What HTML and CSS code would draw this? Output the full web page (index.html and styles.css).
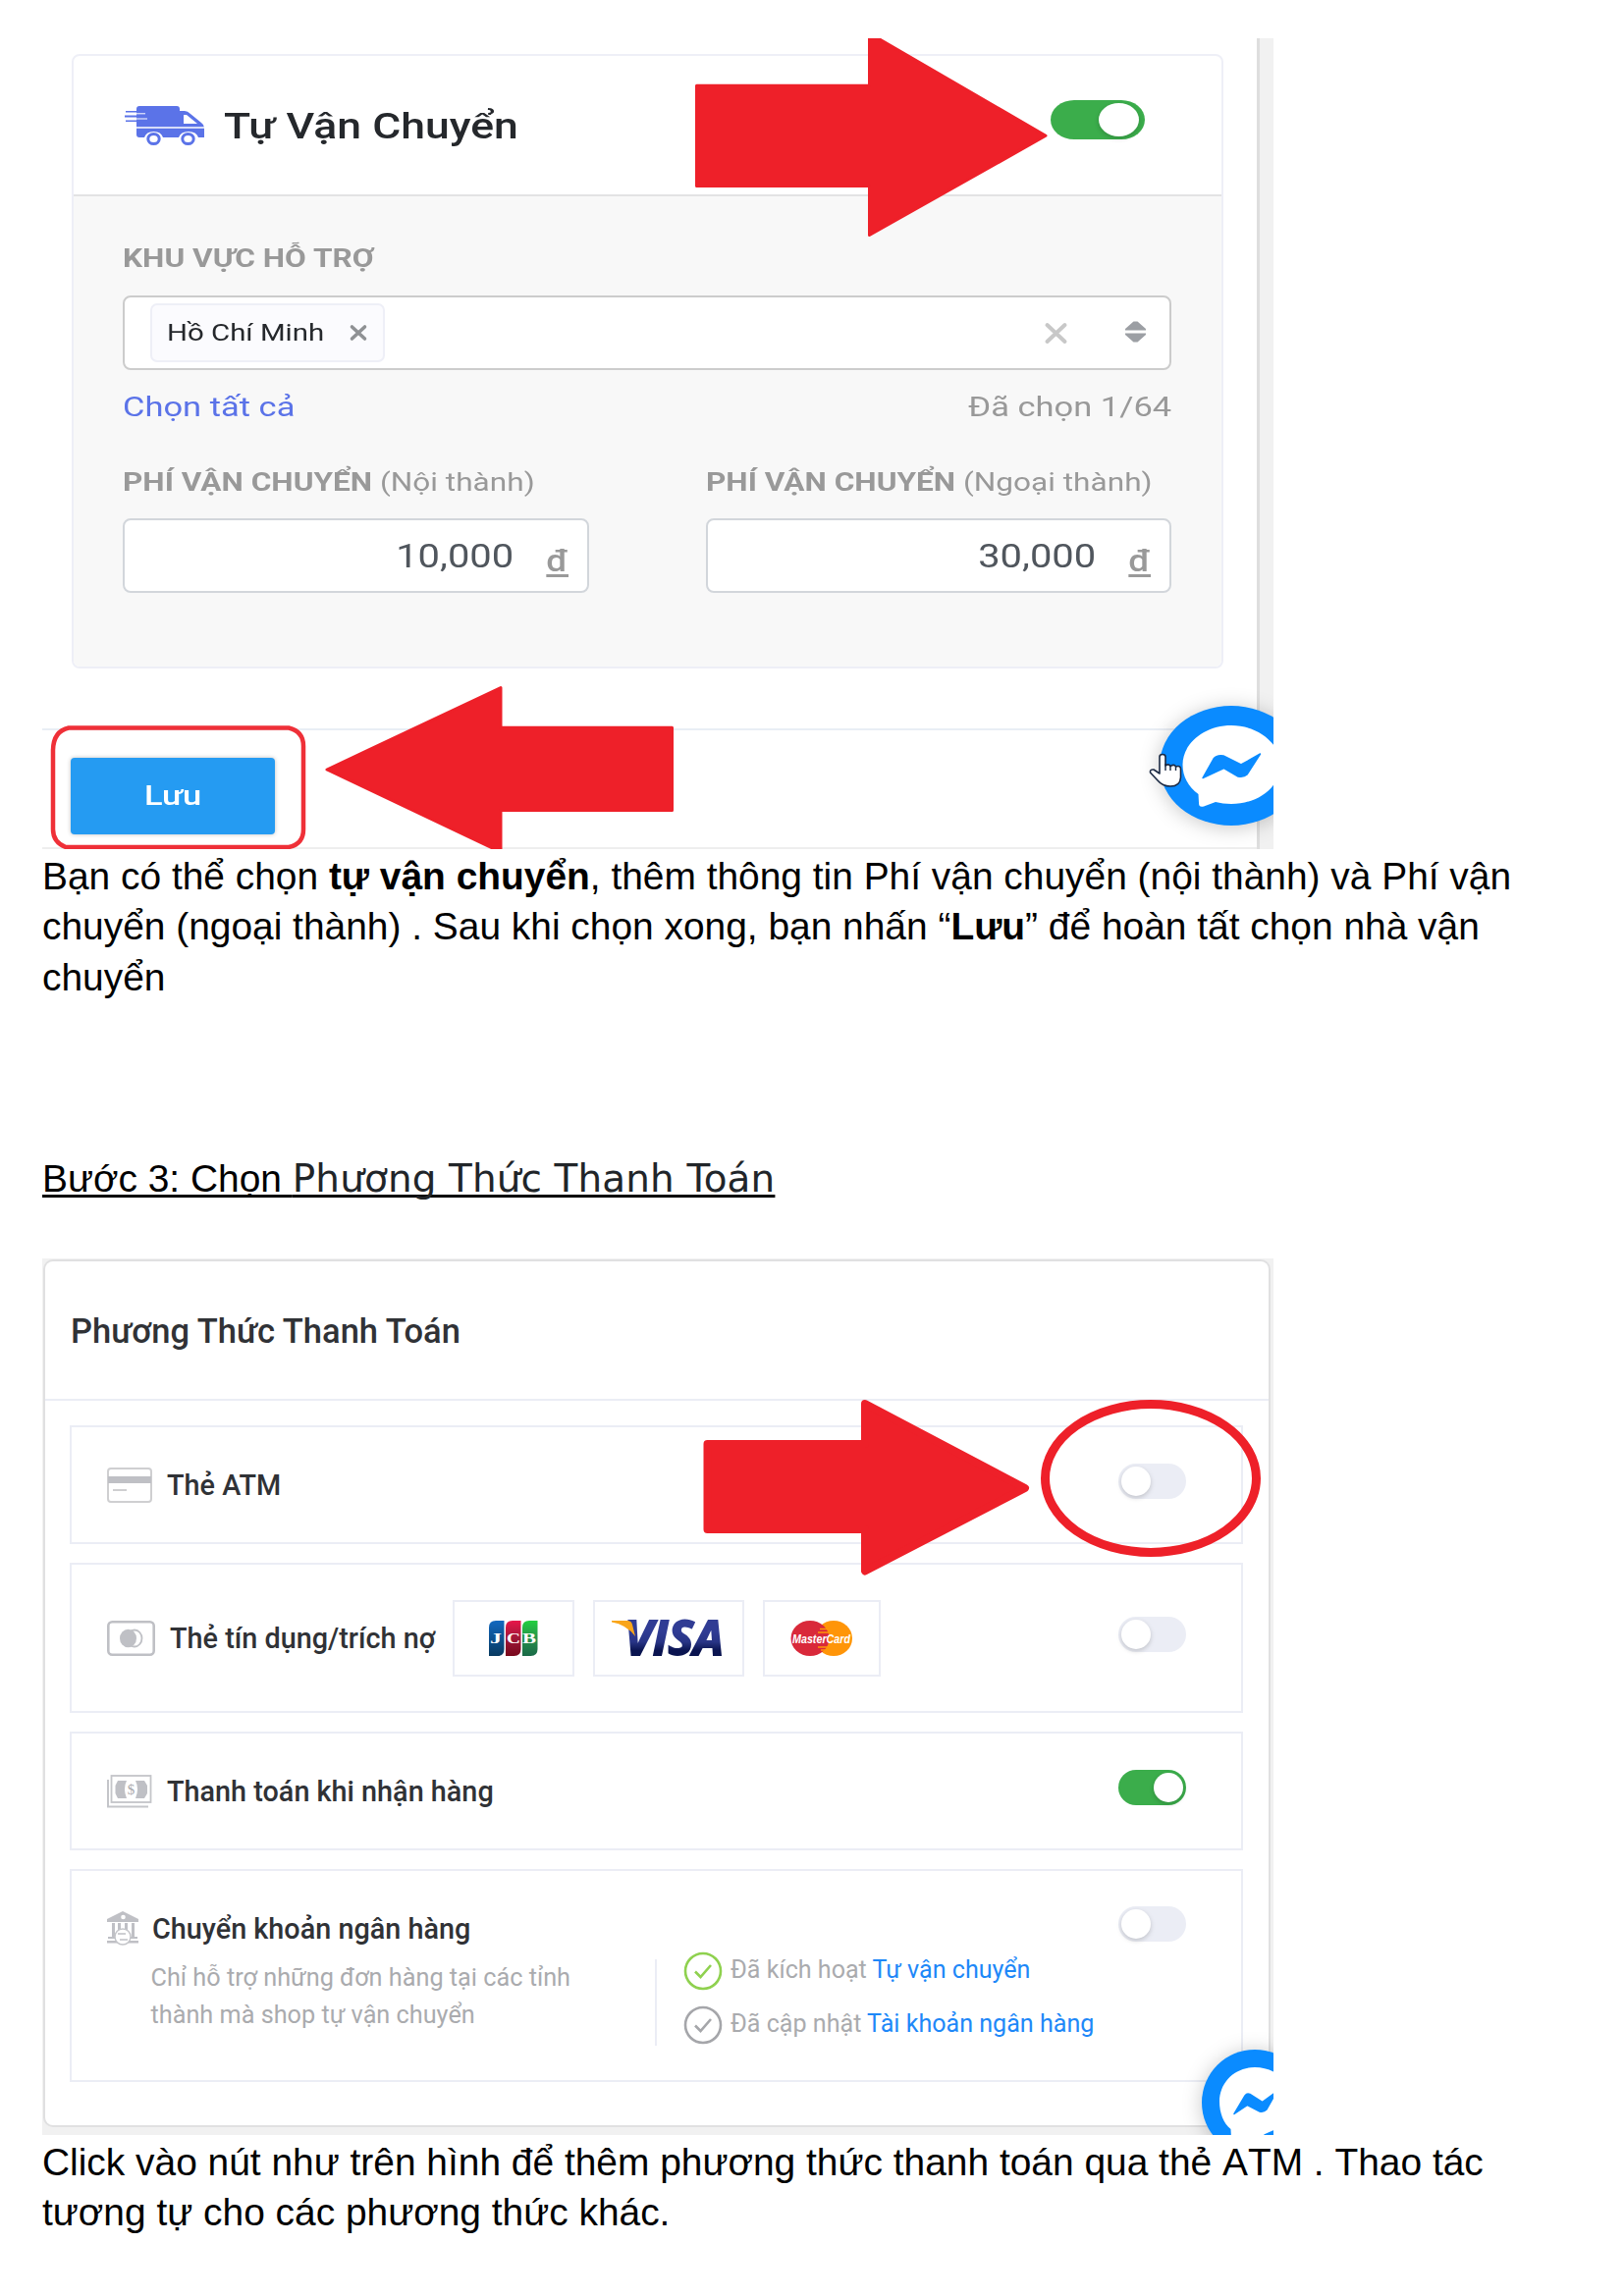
FILE: index.html
```html
<!DOCTYPE html>
<html lang="vi">
<head>
<meta charset="utf-8">
<title>Hướng dẫn vận chuyển và thanh toán</title>
<link rel="stylesheet" href="styles.css">
</head>
<body>
<main class="page">
  <figure class="shot shipping">
    <div class="shipping-main">
      <section class="ship-card">
        <header class="ship-head">
          <svg class="truck" width="81" height="40" viewBox="0 0 81 40">
            <path fill="#5b73e8" d="M12 3Q12 0 15 0H53Q56 0 56 3V5H61Q64 5 67 8L78 17Q81 19 81 22V32H75Q73 26 65 26Q57 26 55 32H39Q37 26 29.500 26Q22 26 20 32H15Q12 32 12 29V16H1V14.500H12V11.500H0V9.500H12V6.500H1V5H12Z"/>
            <path fill="#fff" d="M60 9H63L74 18H60Z"/>
            <path stroke="#fff" stroke-width="1.300" d="M12 22H81"/>
            <path stroke="#fff" stroke-width="1" d="M12 7.800H21M12 13H23"/>
            <g fill="#fff" stroke="#5b73e8" stroke-width="3"><ellipse cx="29.500" cy="33.500" rx="5.700" ry="5"/><ellipse cx="64.500" cy="33.500" rx="5.700" ry="5"/></g>
          </svg>
          <h2 class="ship-title wide">Tự Vận Chuyển</h2>
          <span class="toggle toggle-lg on"></span>
        </header>
        <div class="ship-body">
          <div class="label"><span class="wide"><b>KHU VỰC HỖ TRỢ</b></span></div>
          <div class="select">
            <span class="tag">
              <span class="tag-text"><span class="wide">Hồ Chí Minh</span></span>
              <svg width="18" height="16" viewBox="0 0 18 16"><path stroke="#8f9194" stroke-width="3.600" stroke-linecap="round" d="M2.500 2L15.500 14M15.500 2L2.500 14"/></svg>
            </span>
            <svg class="clear" width="23" height="21" viewBox="0 0 23 21"><path stroke="#c8c8c8" stroke-width="4" stroke-linecap="round" d="M2.500 2L20.500 19M20.500 2L2.500 19"/></svg>
            <svg class="sort" width="21" height="22" viewBox="0 0 21 22"><path fill="#9c9fa4" d="M0 9.500V8L8.500 0.500H12.500L21 8V9.500ZM0 12.500V14L8.500 21.500H12.500L21 14V12.500Z"/></svg>
          </div>
          <div class="under">
            <a class="wide pick">Chọn tất cả</a>
            <span class="wide-r">Đã chọn 1/64</span>
          </div>
          <div class="fees">
            <div>
              <div class="label"><span class="wide"><b>PHÍ VẬN CHUYỂN</b> (Nội thành)</span></div>
              <div class="field"><span class="wide-r">10,000</span><span class="dong">đ</span></div>
            </div>
            <div>
              <div class="label"><span class="wide"><b>PHÍ VẬN CHUYỂN</b> (Ngoại thành)</span></div>
              <div class="field"><span class="wide-r">30,000</span><span class="dong">đ</span></div>
            </div>
          </div>
        </div>
      </section>
      <footer class="save-bar"><span class="save"><span class="wide-c">Lưu</span></span></footer>
    </div>
    <div class="gutter"></div>
    <svg class="marks" width="1254" height="826" viewBox="43 39 1254 826">
      <g fill="#ee2029" stroke="#ee2029" stroke-width="3" stroke-linejoin="round">
        <path d="M709.500 87.200H885.500V34L1065 138.300L885.500 239.500V189.500H709.500Z"/>
        <path d="M684.500 741.300H510V700.500L333 784L510 868V825.500H684.500Z"/>
      </g>
      <path fill="none" stroke="#ee2029" stroke-width="4.500" opacity=".93" d="M70 741.500H294Q309 745 309 760V845Q309 860 294 863H67Q54 858 54 845V765Q54 745 70 741.500Z"/>
      <g>
        <ellipse class="bubble-shadow" cx="1254" cy="780" rx="73" ry="61" fill="#0a8bff"/>
        <path fill="#fff" d="M1254 739C1281 739 1304 757 1304 779C1304 802 1281 819 1254 819C1248 819 1243 818 1238 817L1226 821.500Q1221 823 1221 818L1220.500 809C1210 801 1204.500 791 1204.500 779C1204.500 757 1227 739 1254 739Z"/>
        <path fill="#0a8bff" stroke="#0a8bff" stroke-width="1.500" stroke-linejoin="round" d="M1225 792.500L1236 773Q1239 769 1246 770L1264 779L1283.500 768L1270 789Q1267 792 1261 791L1246.500 782.500Z"/>
      </g>
      <path fill="#fff" stroke="#1c2a44" stroke-width="1.600" stroke-linejoin="round" d="M1181 788V771Q1181 768.500 1184 768.500Q1187 768.500 1187 771V780Q1190 777.500 1192 780.500Q1196 778 1197.500 781Q1202 779.500 1202.500 783V792Q1202 801 1192 801Q1184 801 1179 795L1171.500 787Q1171 783.500 1175 784Z"/>
      <path stroke="#1c2a44" stroke-width="1.400" d="M1187 778V785M1192 780V785M1197.500 781V785"/>
    </svg>
  </figure>

  <p class="para first">Bạn có thể chọn <b>tự vận chuyển</b>, thêm thông tin Phí vận chuyển (nội thành) và Phí vận<br>chuyển (ngoại thành) . Sau khi chọn xong, bạn nhấn “<b>Lưu</b>” để hoàn tất chọn nhà vận<br>chuyển</p>

  <h1 class="step">Bước 3: Chọn <span class="step-name">Phương Thức Thanh Toán</span></h1>

  <figure class="shot payment">
    <section class="pay-card">
      <h2 class="pay-head">Phương Thức Thanh Toán</h2>
      <div class="rows">
        <div class="row">
          <svg width="46" height="36" viewBox="0 0 46 36"><rect x="1" y="1" width="44" height="34" rx="3" fill="#fff" stroke="#cfcfd1" stroke-width="2"/><path fill="#bfc0c5" d="M1 9H45V16H1Z"/><path stroke="#cfcfd1" stroke-width="2" d="M6 23H20"/></svg>
          <span class="name">Thẻ ATM</span>
          <span class="toggle"></span>
        </div>
        <div class="row tall">
          <svg width="49" height="36" viewBox="0 0 49 36"><rect x="1.300" y="1.300" width="46.400" height="33.400" rx="4" fill="#fff" stroke="#bfc0c5" stroke-width="2.600"/><ellipse cx="28" cy="18" rx="7.500" ry="8.500" fill="#fff" stroke="#bfc0c5" stroke-width="1.800"/><ellipse cx="21.500" cy="18" rx="8.500" ry="9.300" fill="#bfc0c5"/></svg>
          <span class="name">Thẻ tín dụng/trích nợ</span>
          <span class="brands">
            <span class="brand jcb">
              <svg width="50" height="36" viewBox="0 0 50 36">
                <defs>
                  <linearGradient id="j1" x2="0" y2="1"><stop stop-color="#1268c0"/><stop offset="1" stop-color="#083a60"/></linearGradient>
                  <linearGradient id="j2" x2="0" y2="1"><stop stop-color="#e8174a"/><stop offset=".5" stop-color="#a01838"/><stop offset="1" stop-color="#78081c"/></linearGradient>
                  <linearGradient id="j3" x2="0" y2="1"><stop stop-color="#22d040"/><stop offset=".5" stop-color="#27904a"/><stop offset="1" stop-color="#1a6a48"/></linearGradient>
                </defs>
                <path fill="url(#j1)" d="M0 7Q0 0 7 0H15.500V29Q15.500 36 8.500 36H0Z"/>
                <path fill="url(#j2)" d="M17 7Q17 0 24 0H32.500V29Q32.500 36 25.500 36H17Z"/>
                <path fill="url(#j3)" d="M34 7Q34 0 41 0H49.500V29Q49.500 36 42.500 36H34Z"/>
                <g class="jcb-text"><text x="1" y="22.500" textLength="12" lengthAdjust="spacingAndGlyphs">J</text><text x="18" y="22.500" textLength="14" lengthAdjust="spacingAndGlyphs">C</text><text x="34" y="22.500" textLength="14" lengthAdjust="spacingAndGlyphs">B</text></g>
              </svg>
            </span>
            <span class="brand visa">
              <svg width="116" height="36" viewBox="0 0 116 36">
                <defs>
                  <linearGradient id="v1" gradientUnits="userSpaceOnUse" x1="0" x2="0" y1="0" y2="36"><stop offset=".3" stop-color="#303c94"/><stop offset=".6" stop-color="#283486"/><stop offset=".85" stop-color="#0a1450"/></linearGradient>
                </defs>
                <text class="visa-text" x="13" y="35" textLength="101" lengthAdjust="spacingAndGlyphs" fill="url(#v1)" stroke="url(#v1)">VISA</text>
                <path fill="#f9a51a" d="M0 0H16Q20 0 21 4L24 16Q15 4 0 1.500Z"/>
              </svg>
            </span>
            <span class="brand mc">
              <svg width="64" height="36" viewBox="0 0 64 36"><ellipse cx="44" cy="18" rx="19" ry="18" fill="#ff9508"/><ellipse cx="20" cy="18" rx="19.500" ry="18" fill="#d9293a"/><path stroke="#ff9508" stroke-width="1.300" d="M30 8.500H38M28 12H40M28 27H38M31 30H36"/><text class="mc-text" x="2" y="23" textLength="59" lengthAdjust="spacingAndGlyphs">MasterCard</text></svg>
            </span>
          </span>
          <span class="toggle"></span>
        </div>
        <div class="row">
          <svg width="46" height="34" viewBox="0 0 46 34"><path fill="none" stroke="#c4c5c9" stroke-width="2" d="M1 5V32.500H42"/><rect x="4.500" y="1" width="40" height="27" fill="#fff" stroke="#c4c5c9" stroke-width="1.800"/><path fill="#bfc0c5" d="M11 6H20Q16 14 20 24H11L8.500 19V11ZM29 6H38L41 11V19L38 24H29Q33 14 29 6Z"/><text class="dollar" x="24.500" y="20">$</text></svg>
          <span class="name">Thanh toán khi nhận hàng</span>
          <span class="toggle on"></span>
        </div>
        <div class="row bank">
          <svg class="bank-icon" width="33" height="35" viewBox="0 0 33 35"><path fill="#bfc0c5" d="M16 0L32 8V11H0V8ZM5 12H8V26H5ZM11 12H14V26H11ZM18 12H21V26H18ZM25 12H28V26H25ZM1 26H31V28H1ZM0 30H32V32.500H0Z"/><circle cx="16.500" cy="6" r="2.300" fill="#fff"/><circle cx="16" cy="26" r="8" fill="#fff" stroke="#c4c5c9" stroke-width="1.500"/><path stroke="#bfc0c5" stroke-width="1.500" d="M11 23H19M13 29H21"/></svg>
          <div class="bank-text">
            <div class="name">Chuyển khoản ngân hàng</div>
            <p class="desc">Chỉ hỗ trợ những đơn hàng tại các tỉnh<br>thành mà shop tự vận chuyển</p>
          </div>
          <ul class="checks">
            <li><svg class="ok" width="40" height="40" viewBox="0 0 40 40"><circle cx="20" cy="20" r="18"/><path d="M12 20.500L17.500 26L28 14"/></svg><span>Đã kích hoạt <a>Tự vận chuyển</a></span></li>
            <li><svg class="idle" width="40" height="40" viewBox="0 0 40 40"><circle cx="20" cy="20" r="18"/><path d="M12 20.500L17.500 26L28 14"/></svg><span>Đã cập nhật <a>Tài khoản ngân hàng</a></span></li>
          </ul>
          <span class="toggle"></span>
        </div>
      </div>
    </section>
    <svg class="marks" width="1254" height="893" viewBox="43 1282 1254 893">
      <path fill="#ee2029" stroke="#ee2029" stroke-width="8" stroke-linejoin="round" d="M720.500 1471H881V1430L1044 1516L881 1600.500V1558H720.500Z"/>
      <ellipse cx="1172" cy="1506" rx="107.500" ry="75.500" fill="none" stroke="#ee2029" stroke-width="9"/>
      <circle class="bubble-shadow" cx="1278" cy="2142" r="54" fill="#0a8bff"/>
      <path fill="#fff" d="M1278 2106C1299 2106 1316 2121 1316 2141C1316 2161 1299 2176 1278 2176L1254 2178L1253.500 2169C1246 2163 1242 2152 1242 2141C1242 2121 1258 2106 1278 2106Z"/>
      <path fill="#0a8bff" stroke="#0a8bff" stroke-width="1.500" stroke-linejoin="round" d="M1257 2153.500L1268 2135Q1270 2132 1273 2133.500L1285.500 2141.500L1300 2131L1290 2149Q1287 2152 1283 2151L1270.500 2144.500ZM1288 2175L1297 2171V2175Z"/>
    </svg>
  </figure>

  <p class="para last">Click vào nút như trên hình để thêm phương thức thanh toán qua thẻ ATM . Thao tác<br>tương tự cho các phương thức khác.</p>
</main>
</body>
</html>
```

FILE: styles.css
```css
* { box-sizing: border-box; }
body { margin: 0; background: #fff; color: #000; font-family: "Liberation Sans", Arial, sans-serif; }
.page { width: 1654px; height: 2339px; padding: 39px 0 0 43px; overflow: hidden; }
svg { display: block; flex: none; overflow: visible; }
h1, h2, p, ul, figure { margin: 0; padding: 0; }

.shot { position: relative; width: 1254px; overflow: hidden; font-family: Roboto, sans-serif; }
.marks { position: absolute; inset: 0; overflow: hidden; }
.bubble-shadow { filter: drop-shadow(0 2px 10px rgba(0, 0, 0, .22)); }

/* horizontally extended lettering of the shipping panel */
.wide, .wide-r, .wide-c { display: inline-block; white-space: nowrap; transform: scaleX(1.21); transform-origin: left; }
.wide-r { transform-origin: right; }
.wide-c { transform-origin: center; }

.toggle { position: relative; flex: none; width: 69px; height: 36px; border-radius: 18px; background: #ebedf5; }
.toggle::after { content: ""; position: absolute; left: 3px; top: 3px; width: 30px; height: 30px; border-radius: 50%; background: #fff; box-shadow: 0 2px 5px rgba(0, 0, 0, .18); }
.toggle.on { background: #3bad4b; }
.toggle.on::after { left: auto; right: 3px; }
.toggle-lg { width: 96px; height: 40px; border-radius: 24px / 20px; }
.toggle-lg::after { width: 41px; height: 34px; }
.toggle-lg.on::after { right: 6px; }

/* shipping */
.shipping { display: flex; height: 826px; }
.shipping-main { width: 1237px; border-bottom: 2px solid #eee; }
.gutter { flex: 1; background: #f1f1f1; border-left: 3px solid #dedede; }
.ship-card { display: flex; flex-direction: column; width: 1173px; height: 626px; margin: 16px 0 61px 30px; border: 2px solid #eeeff7; border-radius: 8px; overflow: hidden; }
.ship-head { display: flex; align-items: center; height: 143px; padding: 0 78px 0 52px; border-bottom: 2px solid #e3e3e4; }
.ship-title { margin: 2px 0 0 20px; font-size: 36px; font-weight: 500; color: #25282c; line-height: 44px; transform: scaleX(1.236); }
.ship-head .toggle { margin: -11px 0 0 auto; }
.ship-body { flex: 1; padding: 48px 51px 0 50px; background: #f8f8f8; color: #999; }
.label { height: 30px; line-height: 31px; font-size: 25px; }
.label .wide { transform: scaleX(1.264); }
.select { display: flex; align-items: center; height: 76px; margin: 23px 0 20px; padding: 0 24px 0 26px; background: #fff; border: 2px solid #ccc; border-radius: 8px; }
.tag { display: flex; align-items: center; width: 239px; height: 60px; padding-left: 15px; border: 2px solid #eeeff7; border-radius: 7px; background: #fbfbfe; color: #25282c; font-size: 24px; }
.tag-text { width: 186px; }
.tag-text .wide { transform: scaleX(1.225); }
.clear { margin: 0 59px 0 auto; }
.sort { margin-top: -2px; }
.under { display: flex; justify-content: space-between; height: 34px; margin-bottom: 45px; line-height: 35px; font-size: 28.5px; }
.pick { color: #5b73e8; }
.fees { display: grid; grid-template-columns: 475px 474px; justify-content: space-between; }
.field { display: flex; align-items: center; justify-content: flex-end; gap: 35px; height: 76px; margin-top: 22px; padding-right: 18px; background: #fff; border: 2px solid #d2d6db; border-radius: 8px; color: #50565d; font-size: 33px; }
.dong { width: 22px; margin-top: 9px; color: #999; font-size: 32px; font-weight: 500; text-decoration: underline; text-decoration-thickness: 3px; text-underline-offset: 3px; transform: scaleX(1.15); }
.save-bar { padding: 28px 0 0 29px; border-top: 2px solid #e9eef5; }
.save { display: flex; align-items: center; justify-content: center; width: 208px; height: 78px; border-radius: 4px; background: #259bf2; box-shadow: 0 0 4px rgba(0, 0, 0, .25); color: #fff; font-size: 28.5px; font-weight: 500; }
.save .wide-c { margin-top: -2px; }

/* document text */
.para { font-size: 38.9px; line-height: 51.4px; white-space: nowrap; }
.first { margin-top: 2px; }
.step { margin: 154px 0 56px; height: 51px; font-size: 38.9px; line-height: 51.4px; font-weight: 400; white-space: nowrap; text-decoration: underline; text-decoration-thickness: 2.5px; text-underline-offset: 3px; text-decoration-skip-ink: none; }
.step-name { font-family: "DejaVu Sans", sans-serif; font-size: 38.9px; letter-spacing: .15px; color: #212529; line-height: 1; }
.last { margin-top: 1.5px; font-kerning: none; }

/* payment */
.payment { height: 893px; padding: 3px 5px 10px 3px; background: #f1f1f1; }
.pay-card { height: 880px; background: #fff; border-radius: 8px; box-shadow: 0 0 0 2px #e0e0e1; }
.pay-head { height: 142px; padding-left: 26px; border-bottom: 2px solid #ebedf5; font-size: 34.5px; font-weight: 500; line-height: 142px; color: #303236; }
.rows { display: flex; flex-direction: column; gap: 19px; padding: 25px 26px 0 25px; }
.row { display: flex; align-items: center; height: 121px; padding: 0 56px 0 36px; border: 2px solid #ebedf5; color: #303236; }
.row .toggle { margin: -8px 0 0 auto; }
.tall { height: 153px; }
.name { margin: 1px 0 0 15px; font-size: 28.8px; font-weight: 500; line-height: 34px; white-space: nowrap; }
.brands { display: flex; gap: 19px; margin-left: 18px; }
.brand { display: flex; align-items: center; justify-content: center; height: 78px; border: 2px solid #ebedf5; }
.jcb { width: 124px; }
.visa { width: 154px; }
.mc { width: 120px; }
.jcb-text { font: 700 14px "Liberation Serif", serif; fill: #fff; }
.visa-text { font: italic 700 48px "Open Sans", sans-serif; stroke-width: 1.8px; }
.mc-text { font: italic 700 13px "Liberation Sans", sans-serif; fill: #fff; }
.dollar { font: 15px "Liberation Serif", serif; fill: #a9aaae; text-anchor: middle; }
.bank { align-items: flex-start; height: 217px; }
.bank-icon { margin-top: 41px; }
.bank-text { width: 525px; padding-top: 41px; }
.bank-text .name { margin-left: 13px; }
.desc { margin: 14px 0 0 11.5px; font-size: 25.25px; line-height: 37.5px; color: #aaabae; white-space: nowrap; }
.checks { display: flex; flex-direction: column; gap: 15px; width: 460px; height: 88px; margin-top: 90px; padding-left: 27px; border-left: 2px solid #ebedf5; list-style: none; }
.checks li { display: flex; align-items: center; gap: 8px; height: 40px; margin-top: -8px; margin-bottom: 8px; font-size: 25.1px; color: #aaabae; white-space: nowrap; }
.checks span { margin-top: -3px; }
.checks a { color: #1e88f8; }
.checks svg { fill: none; stroke-width: 2.6; }
.ok { stroke: #8fd14f; }
.idle { stroke: #a5a6aa; }
.bank .toggle { margin-top: 36px; }
```
